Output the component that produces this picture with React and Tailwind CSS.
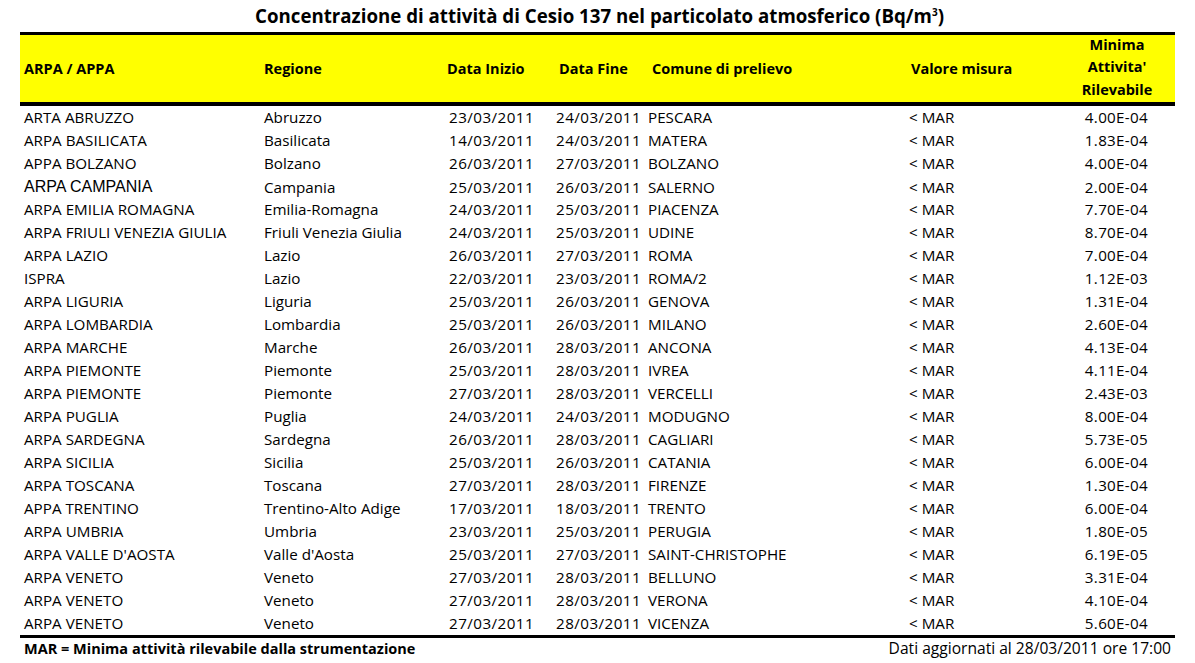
const rows = [
  ['ARTA ABRUZZO', 'Abruzzo', '23/03/2011', '24/03/2011', 'PESCARA', '4.00E-04'],
  ['ARPA BASILICATA', 'Basilicata', '14/03/2011', '24/03/2011', 'MATERA', '1.83E-04'],
  ['APPA BOLZANO', 'Bolzano', '26/03/2011', '27/03/2011', 'BOLZANO', '4.00E-04'],
  ['ARPA CAMPANIA', 'Campania', '25/03/2011', '26/03/2011', 'SALERNO', '2.00E-04', true],
  ['ARPA EMILIA ROMAGNA', 'Emilia-Romagna', '24/03/2011', '25/03/2011', 'PIACENZA', '7.70E-04'],
  ['ARPA FRIULI VENEZIA GIULIA', 'Friuli Venezia Giulia', '24/03/2011', '25/03/2011', 'UDINE', '8.70E-04'],
  ['ARPA LAZIO', 'Lazio', '26/03/2011', '27/03/2011', 'ROMA', '7.00E-04'],
  ['ISPRA', 'Lazio', '22/03/2011', '23/03/2011', 'ROMA/2', '1.12E-03'],
  ['ARPA LIGURIA', 'Liguria', '25/03/2011', '26/03/2011', 'GENOVA', '1.31E-04'],
  ['ARPA LOMBARDIA', 'Lombardia', '25/03/2011', '26/03/2011', 'MILANO', '2.60E-04'],
  ['ARPA MARCHE', 'Marche', '26/03/2011', '28/03/2011', 'ANCONA', '4.13E-04'],
  ['ARPA PIEMONTE', 'Piemonte', '25/03/2011', '28/03/2011', 'IVREA', '4.11E-04'],
  ['ARPA PIEMONTE', 'Piemonte', '27/03/2011', '28/03/2011', 'VERCELLI', '2.43E-03'],
  ['ARPA PUGLIA', 'Puglia', '24/03/2011', '24/03/2011', 'MODUGNO', '8.00E-04'],
  ['ARPA SARDEGNA', 'Sardegna', '26/03/2011', '28/03/2011', 'CAGLIARI', '5.73E-05'],
  ['ARPA SICILIA', 'Sicilia', '25/03/2011', '26/03/2011', 'CATANIA', '6.00E-04'],
  ['ARPA TOSCANA', 'Toscana', '27/03/2011', '28/03/2011', 'FIRENZE', '1.30E-04'],
  ['APPA TRENTINO', 'Trentino-Alto Adige', '17/03/2011', '18/03/2011', 'TRENTO', '6.00E-04'],
  ['ARPA UMBRIA', 'Umbria', '23/03/2011', '25/03/2011', 'PERUGIA', '1.80E-05'],
  ["ARPA VALLE D'AOSTA", "Valle d'Aosta", '25/03/2011', '27/03/2011', 'SAINT-CHRISTOPHE', '6.19E-05'],
  ['ARPA VENETO', 'Veneto', '27/03/2011', '28/03/2011', 'BELLUNO', '3.31E-04'],
  ['ARPA VENETO', 'Veneto', '27/03/2011', '28/03/2011', 'VERONA', '4.10E-04'],
  ['ARPA VENETO', 'Veneto', '27/03/2011', '28/03/2011', 'VICENZA', '5.60E-04'],
];

// fixed column template shared by header and body rows
const cols = 'grid grid-cols-[240px_185px_107px_92px_261px_160px_106px]';

export default function App() {
  return (
    <div className="w-[1195px] h-[663px] bg-white text-black font-['Open_Sans',sans-serif] overflow-hidden">
      <h1 className="h-[32px] pl-[4px] flex items-center justify-center text-[18.7px] font-bold leading-none">
        Concentrazione di attività di Cesio 137 nel particolato atmosferico (Bq/m<sup className="text-[10px] relative -top-[4px]">3</sup>)
      </h1>

      <div className="mx-[20px] w-[1155px]">
        <div className="border-t-[3px] border-b-[4px] border-black">
          <div className={`${cols} h-[67px] bg-[#ffff00] items-center text-[14.5px] font-bold pl-[4px]`}>
            <div>ARPA / APPA</div>
            <div>Regione</div>
            <div className="-ml-[2px]">Data Inizio</div>
            <div className="ml-[3px]">Data Fine</div>
            <div className="ml-[4px]">Comune di prelievo</div>
            <div className="ml-[2px]">Valore misura</div>
            <div className="text-center leading-[22.5px] pr-[10px] -mt-[2px]">
              Minima<br />Attivita'<br />Rilevabile
            </div>
          </div>
        </div>

        <div className="border-b-[3px] border-black">
          {rows.map((r, i) => (
            <div key={i} className={`${cols} h-[23px] items-center text-[15.2px] pl-[4px] pb-[7px]`}>
              <div className={r[6] ? "font-['Liberation_Sans',sans-serif] text-[16px]" : ''}>{r[0]}</div>
              <div>{r[1]}</div>
              <div className="tracking-[0.45px]">{r[2]}</div>
              <div className="tracking-[0.45px]">{r[3]}</div>
              <div>{r[4]}</div>
              <div>&lt; MAR</div>
              <div className="text-right pr-[27px] tracking-[0.3px]">{r[5]}</div>
            </div>
          ))}
        </div>

        <div className="flex justify-between items-center h-[22px] px-[4px]">
          <div className="font-bold text-[14.5px]">MAR = Minima attività rilevabile dalla strumentazione</div>
          <div className="text-[15.6px]">Dati aggiornati al 28/03/2011 ore 17:00</div>
        </div>
      </div>
    </div>
  );
}
